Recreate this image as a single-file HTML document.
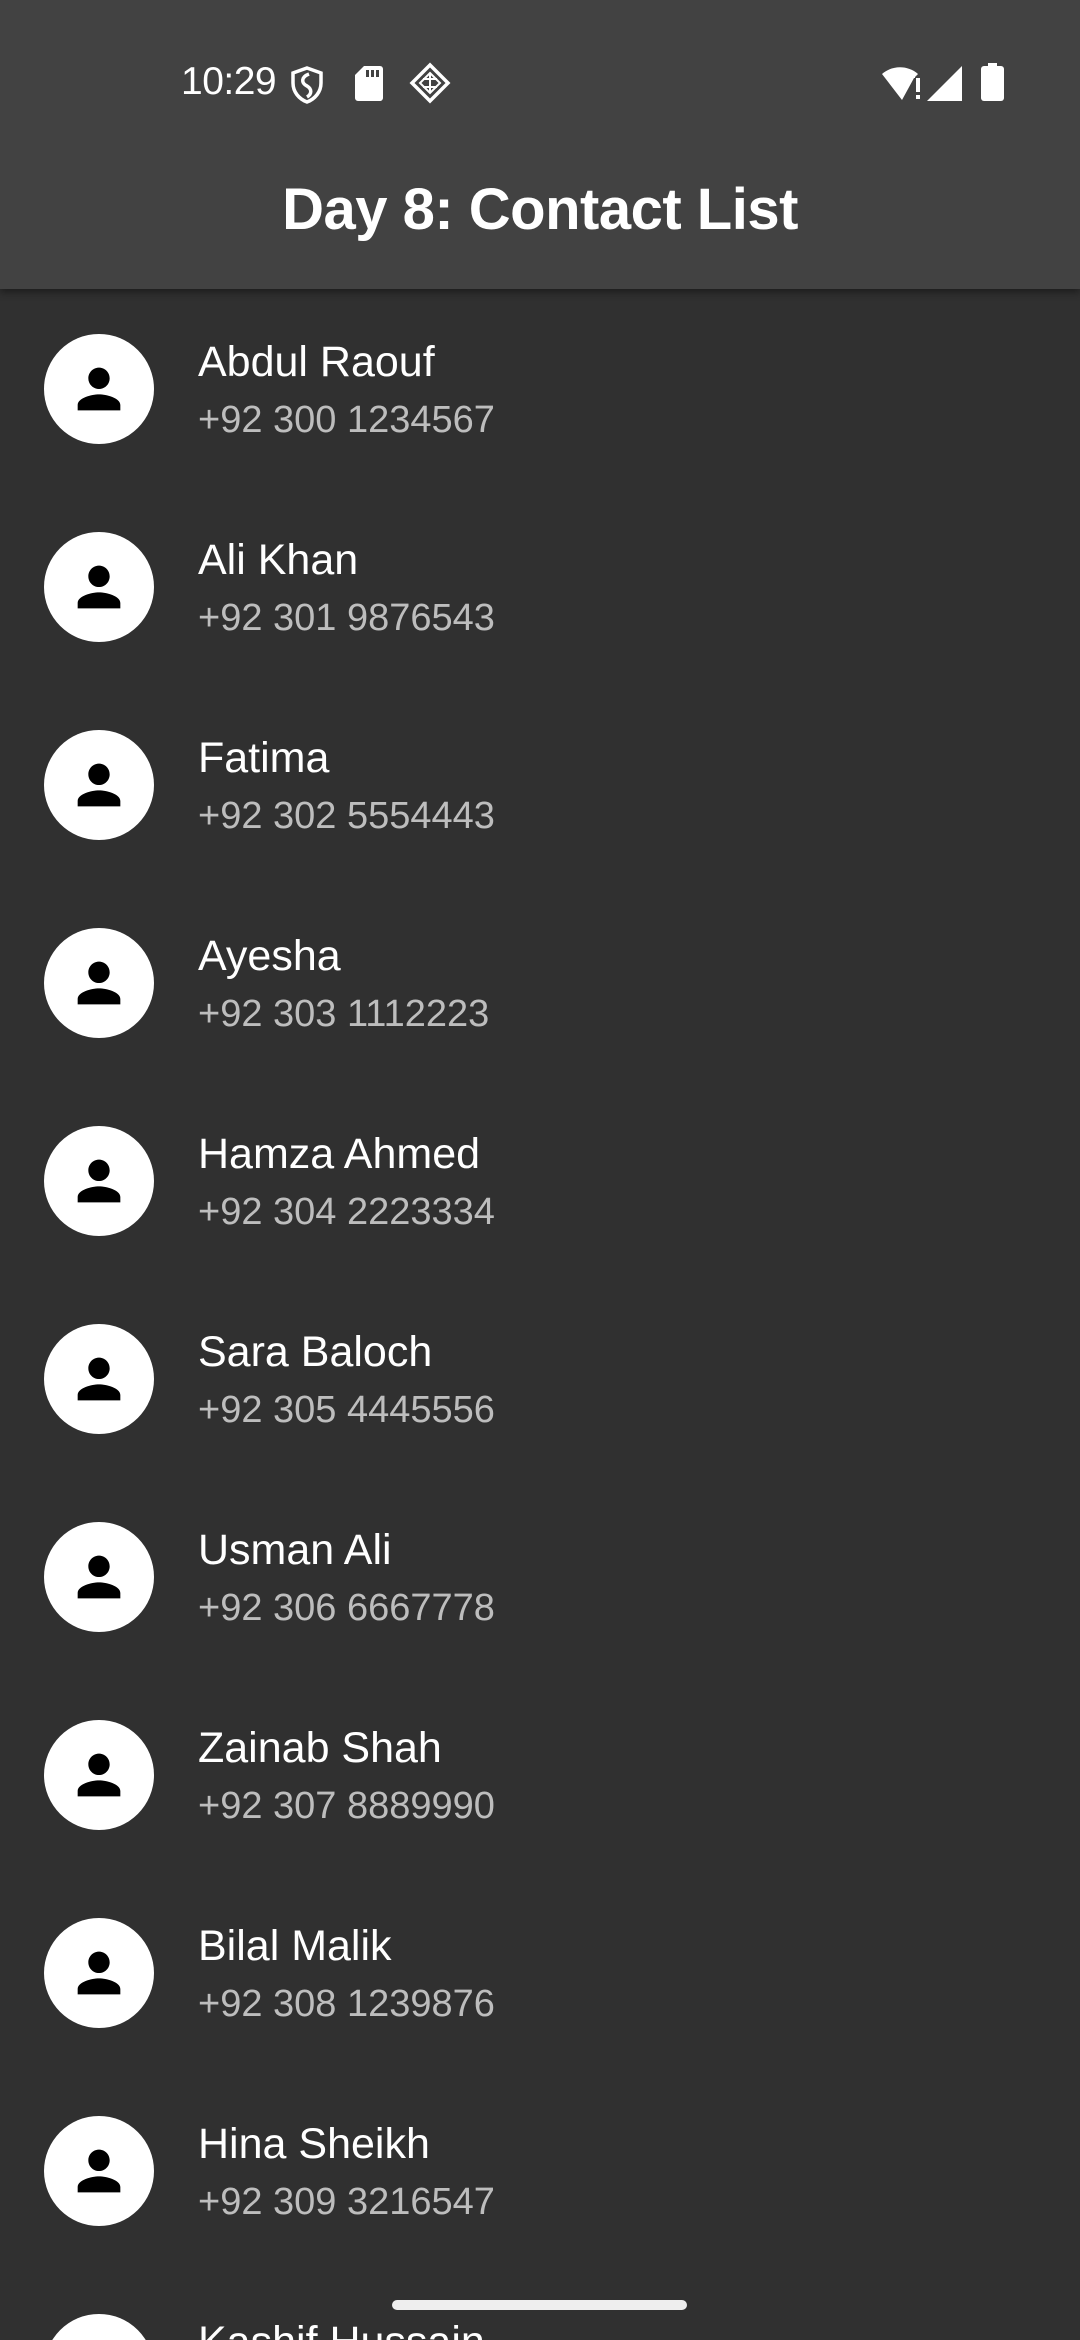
<!DOCTYPE html>
<html><head><meta charset="utf-8">
<style>
html,body{margin:0;padding:0;width:1080px;height:2340px;overflow:hidden;}
body{background:#303030;font-family:"Liberation Sans",Roboto,sans-serif;}
.frame{position:relative;width:1080px;height:2340px;overflow:hidden;background:#303030;}
.bar{position:absolute;left:0;top:0;width:1080px;height:289px;background:#424242;box-shadow:0 3px 8px rgba(0,0,0,0.45);z-index:2;}
.time{position:absolute;left:181px;top:60px;font-size:39px;color:#fff;letter-spacing:-0.5px;}
.title{position:absolute;left:0;width:1080px;top:176px;text-align:center;font-size:58px;font-weight:bold;color:#fff;letter-spacing:-0.5px;}
.item{position:absolute;left:0;width:1080px;height:198px;}
.av{position:absolute;left:44px;top:45px;width:110px;height:110px;border-radius:50%;background:#fff;}
.av svg{position:absolute;left:23px;top:23px;}
.name{position:absolute;left:198px;top:49px;font-size:43px;color:#fff;}
.ph{position:absolute;left:198px;top:110px;font-size:38px;color:#bdbdbd;}
.home{position:absolute;left:392px;top:2300px;width:295px;height:10px;border-radius:5px;background:#eeeeee;z-index:3;}
</style></head><body>
<div class="frame">
<div class="bar">
  <div class="time">10:29</div>
  <svg style="position:absolute;left:290px;top:66px" width="34" height="38" viewBox="0 0 34 38"><path d="M17 2 L31 7 V17 C31 26 25 33 17 36 C9 33 3 26 3 17 V7 Z" fill="none" stroke="#fff" stroke-width="3.5"/><path d="M19 8 C11 11 11 17 17 20 C22 23 22 28 17 31" fill="none" stroke="#fff" stroke-width="3.5"/></svg>
  <svg style="position:absolute;left:355px;top:66px" width="28" height="35" viewBox="0 0 28 35"><path d="M9 0 H25 A3 3 0 0 1 28 3 V32 A3 3 0 0 1 25 35 H3 A3 3 0 0 1 0 32 V9 Z" fill="#fff"/><rect x="11" y="4" width="3" height="7" fill="#424242"/><rect x="16" y="4" width="3" height="7" fill="#424242"/><rect x="21" y="4" width="3" height="7" fill="#424242"/></svg>
  <svg style="position:absolute;left:409px;top:62px" width="42" height="42" viewBox="0 0 42 42"><path d="M21 3 L39 21 L21 39 L3 21 Z" fill="none" stroke="#fff" stroke-width="3.5"/><path d="M21 11 L31 21 L21 31 L11 21 Z M14 17 H28 M14 25 H28 M21 11 V31" fill="none" stroke="#fff" stroke-width="2"/></svg>
  <svg style="position:absolute;left:882px;top:64px" width="40" height="38" viewBox="0 0 40 38"><path d="M0 10 C10 1 26 1 36 10 L33 13 V14 H32 L20 36 Z" fill="#fff"/><rect x="34" y="14" width="4" height="14" fill="#fff"/><rect x="34" y="31" width="4" height="4" fill="#fff"/></svg>
  <svg style="position:absolute;left:927px;top:66px" width="36" height="35" viewBox="0 0 36 35"><path d="M35 0 V35 H0 Z" fill="#fff"/></svg>
  <svg style="position:absolute;left:981px;top:63px" width="23" height="38" viewBox="0 0 23 38"><rect x="7" y="0" width="9" height="4" fill="#fff"/><rect x="0" y="3" width="23" height="35" rx="3" fill="#fff"/></svg>
  <div class="title">Day 8: Contact List</div>
</div>

<div class="item" style="top:289px"><div class="av"><svg width="64" height="64" viewBox="0 0 24 24"><path d="M12 12c2.21 0 4-1.79 4-4s-1.79-4-4-4-4 1.79-4 4 1.79 4 4 4zm0 2c-2.67 0-8 1.34-8 4v2h16v-2c0-2.66-5.33-4-8-4z"/></svg></div><div class="name">Abdul Raouf</div><div class="ph">+92 300 1234567</div></div>
<div class="item" style="top:487px"><div class="av"><svg width="64" height="64" viewBox="0 0 24 24"><path d="M12 12c2.21 0 4-1.79 4-4s-1.79-4-4-4-4 1.79-4 4 1.79 4 4 4zm0 2c-2.67 0-8 1.34-8 4v2h16v-2c0-2.66-5.33-4-8-4z"/></svg></div><div class="name">Ali Khan</div><div class="ph">+92 301 9876543</div></div>
<div class="item" style="top:685px"><div class="av"><svg width="64" height="64" viewBox="0 0 24 24"><path d="M12 12c2.21 0 4-1.79 4-4s-1.79-4-4-4-4 1.79-4 4 1.79 4 4 4zm0 2c-2.67 0-8 1.34-8 4v2h16v-2c0-2.66-5.33-4-8-4z"/></svg></div><div class="name">Fatima</div><div class="ph">+92 302 5554443</div></div>
<div class="item" style="top:883px"><div class="av"><svg width="64" height="64" viewBox="0 0 24 24"><path d="M12 12c2.21 0 4-1.79 4-4s-1.79-4-4-4-4 1.79-4 4 1.79 4 4 4zm0 2c-2.67 0-8 1.34-8 4v2h16v-2c0-2.66-5.33-4-8-4z"/></svg></div><div class="name">Ayesha</div><div class="ph">+92 303 1112223</div></div>
<div class="item" style="top:1081px"><div class="av"><svg width="64" height="64" viewBox="0 0 24 24"><path d="M12 12c2.21 0 4-1.79 4-4s-1.79-4-4-4-4 1.79-4 4 1.79 4 4 4zm0 2c-2.67 0-8 1.34-8 4v2h16v-2c0-2.66-5.33-4-8-4z"/></svg></div><div class="name">Hamza Ahmed</div><div class="ph">+92 304 2223334</div></div>
<div class="item" style="top:1279px"><div class="av"><svg width="64" height="64" viewBox="0 0 24 24"><path d="M12 12c2.21 0 4-1.79 4-4s-1.79-4-4-4-4 1.79-4 4 1.79 4 4 4zm0 2c-2.67 0-8 1.34-8 4v2h16v-2c0-2.66-5.33-4-8-4z"/></svg></div><div class="name">Sara Baloch</div><div class="ph">+92 305 4445556</div></div>
<div class="item" style="top:1477px"><div class="av"><svg width="64" height="64" viewBox="0 0 24 24"><path d="M12 12c2.21 0 4-1.79 4-4s-1.79-4-4-4-4 1.79-4 4 1.79 4 4 4zm0 2c-2.67 0-8 1.34-8 4v2h16v-2c0-2.66-5.33-4-8-4z"/></svg></div><div class="name">Usman Ali</div><div class="ph">+92 306 6667778</div></div>
<div class="item" style="top:1675px"><div class="av"><svg width="64" height="64" viewBox="0 0 24 24"><path d="M12 12c2.21 0 4-1.79 4-4s-1.79-4-4-4-4 1.79-4 4 1.79 4 4 4zm0 2c-2.67 0-8 1.34-8 4v2h16v-2c0-2.66-5.33-4-8-4z"/></svg></div><div class="name">Zainab Shah</div><div class="ph">+92 307 8889990</div></div>
<div class="item" style="top:1873px"><div class="av"><svg width="64" height="64" viewBox="0 0 24 24"><path d="M12 12c2.21 0 4-1.79 4-4s-1.79-4-4-4-4 1.79-4 4 1.79 4 4 4zm0 2c-2.67 0-8 1.34-8 4v2h16v-2c0-2.66-5.33-4-8-4z"/></svg></div><div class="name">Bilal Malik</div><div class="ph">+92 308 1239876</div></div>
<div class="item" style="top:2071px"><div class="av"><svg width="64" height="64" viewBox="0 0 24 24"><path d="M12 12c2.21 0 4-1.79 4-4s-1.79-4-4-4-4 1.79-4 4 1.79 4 4 4zm0 2c-2.67 0-8 1.34-8 4v2h16v-2c0-2.66-5.33-4-8-4z"/></svg></div><div class="name">Hina Sheikh</div><div class="ph">+92 309 3216547</div></div>
<div class="item" style="top:2269px;height:71px;overflow:hidden"><div class="av"><svg width="64" height="64" viewBox="0 0 24 24"><path d="M12 12c2.21 0 4-1.79 4-4s-1.79-4-4-4-4 1.79-4 4 1.79 4 4 4zm0 2c-2.67 0-8 1.34-8 4v2h16v-2c0-2.66-5.33-4-8-4z"/></svg></div><div class="name">Kashif Hussain</div><div class="ph">+92 310 0000000</div></div>
<div class="home"></div>
</div>
</body></html>
